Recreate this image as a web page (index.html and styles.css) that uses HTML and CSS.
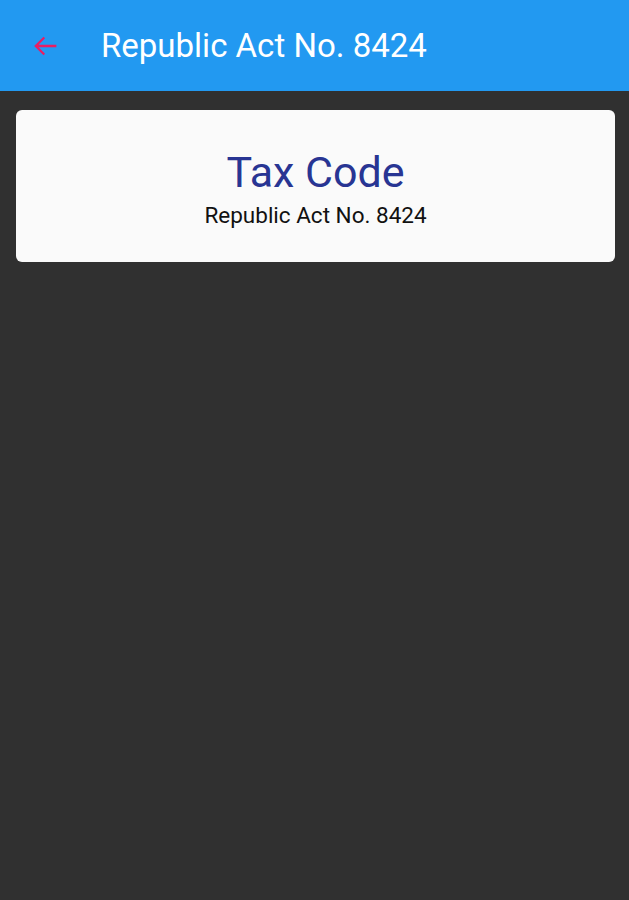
FILE: index.html
```html
<!DOCTYPE html>
<html lang="en">
<head>
    <meta charset="UTF-8">
    <meta name="viewport" content="width=device-width, initial-scale=1.0">
    <title>Republic Act No. 8424</title>
    <link rel="stylesheet" href="styles.css">
</head>
<body>
    <div class="toolbar">
        <button class="back" type="button" aria-label="Back">
            <svg width="34" height="34" viewBox="0 0 24 24">
                <path d="M20 12H5.5M11.5 6l-6 6 6 6" fill="none" stroke="#e91e63" stroke-width="1.6"/>
            </svg>
        </button>
        <h1 class="title">Republic Act No. 8424</h1>
    </div>
    <div class="content">
        <div class="card">
            <div class="card-title">Tax Code</div>
            <div class="card-subtitle">Republic Act No. 8424</div>
        </div>
    </div>
</body>
</html>
```

FILE: styles.css
```css
body {
    margin: 0;
    background-color: #303030;
    font-family: Roboto, "Liberation Sans", sans-serif;
    min-height: 900px;
}
.toolbar {
    display: flex;
    align-items: center;
    height: 91px;
    background-color: #2299f1;
    padding: 0 0 0 28px;
    box-sizing: border-box;
}
.back {
    display: flex;
    background: none;
    border: none;
    padding: 0;
    margin: 0 39px 0 0;
    cursor: pointer;
}
.title {
    margin: 0;
    color: #ffffff;
    font-size: 33px;
    font-weight: 400;
}
.content {
    padding: 19px 14px 0 16px;
}
.card {
    background-color: #fafafa;
    border-radius: 6px;
    height: 152px;
    box-sizing: border-box;
    padding-top: 36px;
    text-align: center;
}
.card-title {
    color: #283593;
    font-size: 43px;
    line-height: 52px;
}
.card-subtitle {
    color: #111111;
    font-size: 22.5px;
    line-height: 26px;
    margin-top: 4px;
}
```
